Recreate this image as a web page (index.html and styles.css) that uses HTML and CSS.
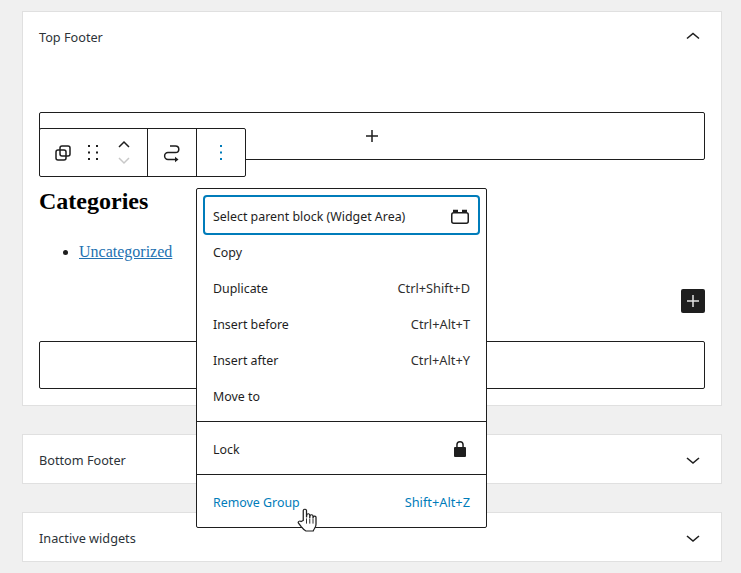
FILE: index.html
```html
<!DOCTYPE html>
<html lang="en">
<head>
    <meta charset="UTF-8">
    <meta name="viewport" content="width=device-width, initial-scale=1.0">
    <title>Widgets</title>
    <link rel="stylesheet" href="styles.css">
</head>
<body>

    <section class="panel panel-open">
        <header class="panel-head">
            <h2 class="panel-title">Top Footer</h2>
            <svg width="24" height="24" viewBox="0 0 24 24"><path d="M6 13.500 12 8.500l6 5" fill="none" stroke="#1e1e1e" stroke-width="1.600"/></svg>
        </header>

        <div class="panel-body">
            <div class="appender">
                <svg width="24" height="24" viewBox="0 0 24 24"><path d="M12 6v12M6 12h12" stroke="#1e1e1e" stroke-width="1.500"/></svg>
            </div>

            <h2 class="widget-title">Categories</h2>
            <ul class="widget-list">
                <li><a href="#">Uncategorized</a></li>
            </ul>

            <div class="add-row">
                <span class="add-btn">
                    <svg width="24" height="24" viewBox="0 0 24 24"><path d="M12 6v12M6 12h12" stroke="#e4e4e4" stroke-width="1.500"/></svg>
                </span>
            </div>

            <div class="empty-block"></div>

            <div class="toolbar">
                <div class="tool-group tool-first">
                    <svg width="24" height="24" viewBox="0 0 24 24" fill="none" stroke="#1e1e1e" stroke-width="1.500"><rect x="5" y="9" width="10" height="10" rx="2"/><rect x="9" y="5" width="10" height="10" rx="2"/></svg>
                    <svg width="24" height="24" viewBox="0 0 24 24" fill="#1e1e1e"><rect x="7" y="4" width="2" height="2"/><rect x="15" y="4" width="2" height="2"/><rect x="7" y="10.500" width="2" height="2"/><rect x="15" y="10.500" width="2" height="2"/><rect x="7" y="17" width="2" height="2"/><rect x="15" y="17" width="2" height="2"/></svg>
                    <div class="movers">
                        <svg width="24" height="15" viewBox="0 0 24 15"><path d="M7 9 12 4l5 5" fill="none" stroke="#1e1e1e" stroke-width="1.500"/></svg>
                        <svg width="24" height="15" viewBox="0 0 24 15"><path d="M7 5l5 5 5-5" fill="none" stroke="#c8c8c8" stroke-width="1.500"/></svg>
                    </div>
                </div>
                <div class="tool-group tool-mid">
                    <svg width="24" height="24" viewBox="0 0 24 24" fill="none" stroke="#1e1e1e" stroke-width="1.500"><path d="M10 5h5.500a3.300 3.300 0 0 1 0 6.600H8a3.400 3.400 0 0 0 0 6.800h7.500"/><path d="M15 15.800v5.400l3.500-2.700z" fill="#1e1e1e" stroke="none"/></svg>
                </div>
                <div class="tool-group tool-last">
                    <svg width="24" height="24" viewBox="0 0 24 24" fill="#007cba"><rect x="11" y="4" width="2" height="2"/><rect x="11" y="10.500" width="2" height="2"/><rect x="11" y="17" width="2" height="2"/></svg>
                </div>
            </div>

            <div class="menu">
                <div class="menu-group menu-top">
                    <div class="menu-item menu-selected">
                        <span>Select parent block (Widget Area)</span>
                        <svg width="24" height="24" viewBox="0 0 24 24" fill="none" stroke="#1e1e1e" stroke-width="1.500"><rect x="3.750" y="8.750" width="16.500" height="10.500" rx="2"/><path d="M5 7h5M14 7h5" stroke-width="2.500"/></svg>
                    </div>
                    <div class="menu-item"><span>Copy</span></div>
                    <div class="menu-item"><span>Duplicate</span><span class="shortcut">Ctrl+Shift+D</span></div>
                    <div class="menu-item"><span>Insert before</span><span class="shortcut">Ctrl+Alt+T</span></div>
                    <div class="menu-item"><span>Insert after</span><span class="shortcut">Ctrl+Alt+Y</span></div>
                    <div class="menu-item"><span>Move to</span></div>
                </div>
                <div class="menu-group">
                    <div class="menu-item menu-lock">
                        <span>Lock</span>
                        <svg width="24" height="24" viewBox="0 0 24 24" fill="#1e1e1e"><path d="M17 10h-1.200V7.800a3.800 3.800 0 0 0-7.600 0V10H7a1 1 0 0 0-1 1v8a1 1 0 0 0 1 1h10a1 1 0 0 0 1-1v-8a1 1 0 0 0-1-1zm-2.700 0H9.700V7.800a2.300 2.300 0 0 1 4.600 0z"/></svg>
                    </div>
                </div>
                <div class="menu-group">
                    <div class="menu-item menu-danger"><span>Remove Group</span><span class="shortcut">Shift+Alt+Z</span></div>
                </div>
            </div>

            <svg class="hand" width="20" height="25" viewBox="1 1 16 24" preserveAspectRatio="none"><path d="M6 13V3.500a1.300 1.300 0 0 1 2.600 0V10l.2-2.300a1.200 1.200 0 0 1 2.400.2V10.500l.2-1.800a1.200 1.200 0 0 1 2.400.1v2l.2-1a1.100 1.100 0 0 1 2.200.2v6.500c0 1.500-.4 2.700-1 3.800-.5 1.100-1 2-1.200 2.700H8c-1.300-1-2.400-2.300-3.500-3.900L2.200 15.500c-.8-1.300 1-2.700 2.100-1.500z" fill="#fff" stroke="#1e1e1e" stroke-width="1"/><path d="M8.600 11v5M11.200 11v5M13.800 11v5" stroke="#1e1e1e" stroke-width=".8"/></svg>
        </div>
    </section>

    <section class="panel">
        <header class="panel-head">
            <h2 class="panel-title">Bottom Footer</h2>
            <svg width="24" height="24" viewBox="0 0 24 24"><path d="M6 11l6 5 6-5" fill="none" stroke="#1e1e1e" stroke-width="1.600"/></svg>
        </header>
    </section>

    <section class="panel">
        <header class="panel-head">
            <h2 class="panel-title">Inactive widgets</h2>
            <svg width="24" height="24" viewBox="0 0 24 24"><path d="M6 11l6 5 6-5" fill="none" stroke="#1e1e1e" stroke-width="1.600"/></svg>
        </header>
    </section>

</body>
</html>
```

FILE: styles.css
```css
/* Page */
html, body {
    height: 573px;
    overflow: hidden;
}

body {
    margin: 0;
    padding: 11px 19px 0 22px;
    background: #f0f0f0;
    font-family: "Noto Sans", sans-serif;
    font-size: 12px;
    color: #1e1e1e;
    display: flex;
    flex-direction: column;
    gap: 28px;
}

svg {
    display: block;
    flex: none;
}

/* Widget area panels */
.panel {
    background: #fff;
    border: 1px solid #e0e0e0;
}

.panel-open {
    height: 395px;
    box-sizing: border-box;
}

.panel-head {
    height: 48px;
    padding: 0 16px;
    display: flex;
    align-items: center;
    justify-content: space-between;
}

.panel-open .panel-head {
    height: 50px;
}

.panel-title {
    margin: 2px 0 0;
    font-size: 12.700px;
    font-weight: 400;
    color: #2c3338;
}

.panel-open .panel-title {
    margin-top: 0;
}

/* Block list */
.panel-body {
    position: relative;
    padding: 50px 16px 0;
}

.appender {
    height: 46px;
    border: 1px solid #1e1e1e;
    border-radius: 2px;
    display: flex;
    align-items: center;
    justify-content: center;
}

.widget-title {
    margin: 26px 0 0;
    font-family: "Liberation Serif", serif;
    font-size: 24px;
    font-weight: 700;
    line-height: 30px;
    color: #000;
}

.widget-list {
    margin: 24px 0 0;
    padding-left: 40px;
    font-family: "Liberation Serif", serif;
    font-size: 16px;
    line-height: 24px;
}

.widget-list a {
    color: #2271b1;
}

.add-row {
    margin-top: 25px;
    display: flex;
    justify-content: flex-end;
}

.add-btn {
    width: 24px;
    height: 24px;
    background: #1e1e1e;
    border-radius: 2px;
}

.empty-block {
    height: 46px;
    margin-top: 28px;
    border: 1px solid #1e1e1e;
    border-radius: 2px;
}

/* Block toolbar */
.toolbar {
    position: absolute;
    top: 66px;
    left: 16px;
    height: 47px;
    display: flex;
    background: #fff;
    border: 1px solid #1e1e1e;
    border-radius: 2px;
}

.tool-group {
    display: flex;
    align-items: center;
    border-left: 1px solid #1e1e1e;
}

.tool-first {
    width: 107px;
    box-sizing: border-box;
    padding-left: 11px;
    gap: 6px;
    border-left: 0;
}

.tool-mid,
.tool-last {
    width: 49px;
    box-sizing: border-box;
    justify-content: center;
}

.movers {
    margin-left: 1px;
    display: flex;
    flex-direction: column;
}

/* Options menu */
.menu {
    position: absolute;
    top: 126px;
    left: 173px;
    width: 291px;
    box-sizing: border-box;
    background: #fff;
    border: 1px solid #1e1e1e;
    border-radius: 2px;
}

.menu-group {
    padding: 8px 6px;
    border-top: 1px solid #1e1e1e;
}

.menu-top {
    padding: 6px 6px 8px;
    border-top: 0;
}

.menu-item {
    height: 36px;
    box-sizing: border-box;
    padding: 2px 10px 0;
    display: flex;
    align-items: center;
    justify-content: space-between;
    font-size: 12.400px;
}

.menu-selected {
    height: 40px;
    margin-bottom: -2px;
    padding: 2px 6px 0 8px;
    border: 2px solid #007cba;
    border-radius: 4px;
}

.menu-lock {
    padding-right: 8px;
}

.shortcut {
    font-size: 12.800px;
    color: #2f2f2f;
}

.menu-danger,
.menu-danger .shortcut {
    color: #007cba;
}

/* Mouse pointer */
.hand {
    position: absolute;
    top: 446px;
    left: 274px;
}
```
